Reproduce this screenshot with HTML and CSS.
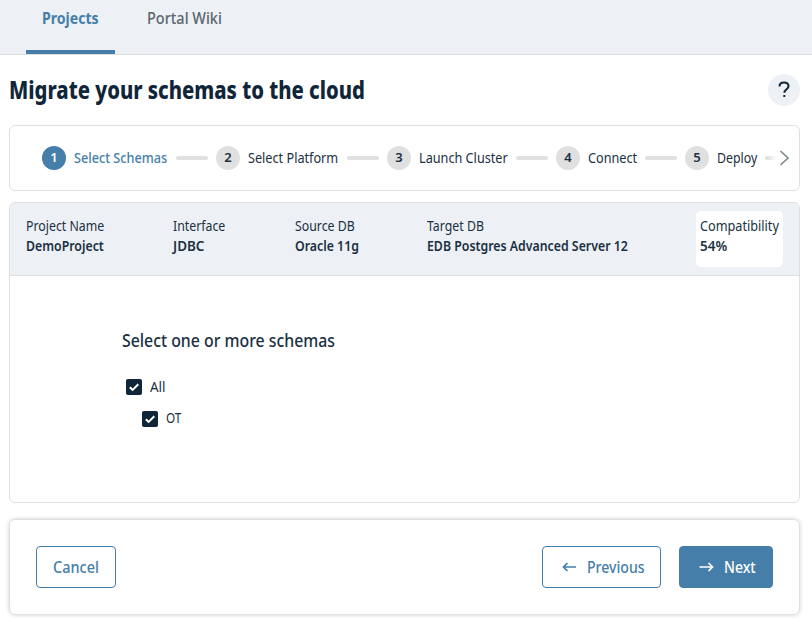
FILE: index.html
```html
<!DOCTYPE html>
<html lang="en">
<head>
<meta charset="utf-8">
<title>Migration Portal</title>
<link rel="stylesheet" href="styles.css">
</head>
<body>
<nav class="tabs">
  <a class="tab tab-active"><span class="t">Projects</span></a>
  <a class="tab"><span class="t t-wide">Portal Wiki</span></a>
</nav>
<main>
  <header class="title-row">
    <h1><span class="t t-title">Migrate your schemas to the cloud</span></h1>
    <button class="help" aria-label="Help"><svg width="12" height="18" viewBox="0 0 12 18"><path d="M1.5 5.4C1.5 2.8 3.3 1.5 6 1.5s4.5 1.5 4.5 3.7c0 3-4.1 3.2-4.1 6.5" fill="none" stroke="#102638" stroke-width="2"/><path d="M5.3 14h2v2h-2z" fill="#102638"/></svg></button>
  </header>
  <section class="steps">
    <div class="step current"><b>1</b><span class="label w1"><span class="t t-wide">Select Schemas</span></span><i></i></div>
    <div class="step"><b>2</b><span class="label w2"><span class="t t-wide">Select Platform</span></span><i></i></div>
    <div class="step"><b>3</b><span class="label w3"><span class="t t-wide">Launch Cluster</span></span><i></i></div>
    <div class="step"><b>4</b><span class="label w4"><span class="t t-wide">Connect</span></span><i></i></div>
    <div class="step"><b>5</b><span class="label w5"><span class="t">Deploy</span></span><i class="fade"></i></div>
    <svg class="chevron" width="11" height="18" viewBox="0 0 11 18"><path d="M1.5 2l7.5 7-7.5 7" fill="none" stroke="#7b898e" stroke-width="1.6"/></svg>
  </section>
  <section class="panel">
    <div class="summary">
      <div class="fact"><span class="t">Project Name</span><strong class="t">DemoProject</strong></div>
      <div class="fact"><span class="t">Interface</span><strong class="t t-wider">JDBC</strong></div>
      <div class="fact"><span class="t">Source DB</span><strong class="t">Oracle 11g</strong></div>
      <div class="fact"><span class="t">Target DB</span><strong class="t">EDB Postgres Advanced Server 12</strong></div>
      <div class="fact score"><span class="t t-wide">Compatibility</span><strong class="t t-wider">54%</strong></div>
    </div>
    <div class="schemas">
      <h2><span class="t">Select one or more schemas</span></h2>
      <div class="check"><span class="box"><svg width="16" height="16" viewBox="0 0 16 16"><path d="M3.8 8.2l2.8 2.7 5.7-5.6" fill="none" stroke="#fff" stroke-width="2"/></svg></span><span class="t t-wider">All</span></div>
      <div class="check nested"><span class="box"><svg width="16" height="16" viewBox="0 0 16 16"><path d="M3.8 8.2l2.8 2.7 5.7-5.6" fill="none" stroke="#fff" stroke-width="2"/></svg></span><span class="t t-narrow">OT</span></div>
    </div>
  </section>
  <footer class="actions">
    <button class="btn cancel"><span class="t t-wide">Cancel</span></button>
    <button class="btn previous"><svg width="15" height="10" viewBox="0 0 15 10"><path d="M14 5H2M5.5 1L1.5 5l4 4" fill="none" stroke="currentColor" stroke-width="1.7"/></svg><span class="t">Previous</span></button>
    <button class="btn next"><svg width="15" height="10" viewBox="0 0 15 10"><path d="M.5 5h12.5M9.5 1l4 4-4 4" fill="none" stroke="currentColor" stroke-width="1.7"/></svg><span class="t">Next</span></button>
  </footer>
</main>
</body>
</html>
```
FILE: styles.css
```css
* { box-sizing: border-box; }
body {
  margin: 0;
  min-height: 100vh;
  background: #fff;
  color: #1a3042;
  font: 400 14px/20px "Noto Sans", sans-serif;
}
/* Condensed text */
.t {
  display: inline-block;
  white-space: nowrap;
  transform: scaleX(.88);
  transform-origin: 0 50%;
}
.t-wide { transform: scaleX(.905); }
.t-wider { transform: scaleX(.96); }
.t-narrow { transform: scaleX(.84); }
.t-title { transform: scaleX(.843); }

.tabs {
  display: flex;
  height: 55px;
  padding-left: 26px;
  gap: 16px;
  background: #edf0f5;
  border-bottom: 1px solid #dedfe0;
}
.tab {
  height: 54px;
  width: 107px;
  padding: 8px 16px 0;
  font-size: 16px;
  font-weight: 500;
  color: #5b666c;
}
.tab-active {
  width: 89px;
  border-bottom: 4px solid #457ea9;
  color: #457ea9;
  font-weight: 700;
}
main { padding: 0 12px 4px 9px; }
.title-row {
  display: flex;
  justify-content: space-between;
  align-items: flex-start;
  height: 70px;
  padding-top: 19px;
}
h1 {
  margin: 0;
  padding-top: 1px;
  color: #102638;
  font-size: 24px;
  line-height: 30px;
  font-weight: 800;
}
button { font-family: inherit; padding: 0; }
.help {
  display: flex;
  align-items: center;
  justify-content: center;
  width: 32px;
  height: 32px;
  border: 0;
  border-radius: 50%;
  background: #edf0f5;
}
.steps {
  display: flex;
  align-items: center;
  height: 66px;
  padding-left: 32px;
  border: 1px solid #dedfe0;
  border-radius: 6px;
}
.step { display: flex; align-items: center; flex: none; }
.step b {
  width: 24px;
  height: 24px;
  border-radius: 50%;
  background: #e0e0e0;
  font-size: 13px;
  font-weight: 600;
  line-height: 23px;
  text-align: center;
}
.step i {
  width: 32px;
  height: 4px;
  margin: 0 8px;
  border-radius: 2px;
  background: #e0e0e0;
}
.step .fade {
  width: 12px;
  margin-right: 0;
  background: linear-gradient(90deg, #e0e0e0 20%, #fff);
}
.current b { background: #457ea9; color: #fff; }
.current .label { color: #457ea9; font-weight: 500; }
.label { margin-left: 8px; padding-bottom: 1px; }
.w1 { width: 94px; }
.w2 { width: 91px; }
.w3 { width: 89px; }
.w4 { width: 49px; }
.w5 { width: 40px; }
.chevron { flex: none; margin-left: 2px; }

.panel {
  height: 301px;
  margin-top: 11px;
  border: 1px solid #dedfe0;
  border-radius: 6px;
  overflow: hidden;
}
.summary {
  display: grid;
  grid-template-columns: 147px 122px 132px 269px 87px;
  height: 73px;
  padding: 8px 0 8px 16px;
  background: #edf0f5;
  border-bottom: 1px solid #dedfe0;
}
.fact { padding-top: 5px; }
.fact .t { display: block; width: max-content; }
.fact strong { font-weight: 600; }
.score { padding-left: 4px; background: #fff; border-radius: 5px; }
.schemas { padding: 53px 0 0 112px; }
h2 { margin: 0; font-size: 18px; font-weight: 500; line-height: 22px; }
.check {
  display: flex;
  align-items: center;
  gap: 8px;
  height: 16px;
  margin: 28px 0 0 4px;
}
.nested { margin: 16px 0 0 20px; }
.nested .t { margin-bottom: 2px; }
.box {
  width: 16px;
  height: 16px;
  border-radius: 2px;
  background: #102638;
}
.box svg { display: block; }

.actions {
  display: flex;
  align-items: center;
  height: 96px;
  margin-top: 16px;
  padding: 0 26px;
  border: 1px solid #dedfe0;
  border-radius: 6px;
  box-shadow: 0 0 4px rgba(0, 0, 0, .18);
}
.btn {
  display: flex;
  align-items: center;
  height: 42px;
  border: 1px solid #457ea9;
  border-radius: 4px;
  background: #fff;
  color: #457ea9;
  font-size: 16px;
  font-weight: 500;
  line-height: 20px;
}
.cancel { width: 80px; padding-left: 16px; }
.previous { width: 119px; margin-left: auto; padding-left: 19px; gap: 10px; }
.next {
  width: 94px;
  margin-left: 18px;
  padding-left: 19px;
  gap: 10px;
  background: #457ea9;
  color: #fff;
}
```
